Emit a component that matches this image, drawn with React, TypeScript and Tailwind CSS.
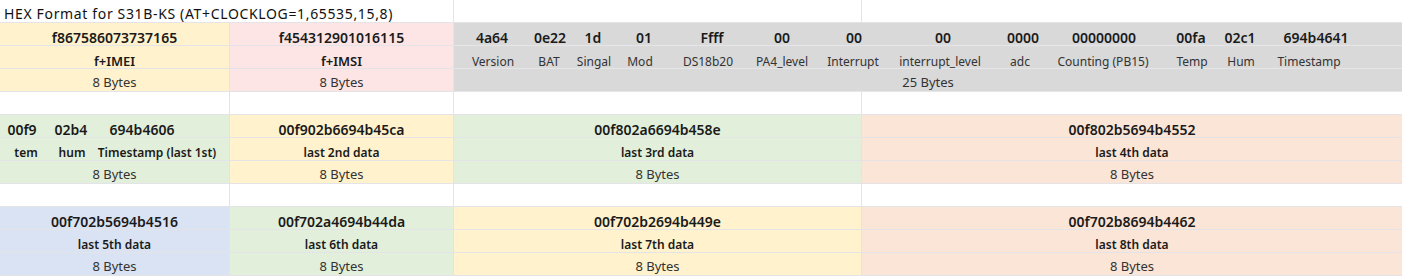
import React from "react";

const VAL = "text-[14px] font-semibold leading-[14px] pt-[8px] text-[#1a1a1a]";
const LABB = "text-[13px] font-semibold leading-[13px] pt-[9px] text-[#1a1a1a]";
const LABD = "text-[12px] font-semibold leading-[12px] pt-[9px] text-[#1a1a1a]";
const LAB = "text-[12px] leading-[12px] pt-[10px] text-[#333]";
const BYT = "text-[13px] leading-[13px] pt-[7px] text-[#333]";

type CellProps = { w: string; bg: string; cls: string; children?: React.ReactNode; last?: boolean };

function Cell({ w, bg, cls, children, last }: CellProps) {
  return (
    <div
      className={`${w} ${bg} ${cls} h-[23px] shrink-0 border-b border-[#e3e3e8] ${last ? "" : "border-r"} whitespace-nowrap text-center`}
    >
      {children}
    </div>
  );
}

type Block = { bg: string; v: string; l: string };

function Band({ cols }: { cols: { w: string; b: Block; last?: boolean }[] }) {
  return (
    <div className="flex">
      {cols.map((c, i) => (
        <div key={i} className={`${c.w} flex flex-col ${c.last ? "flex-1" : "shrink-0"}`}>
          <Cell w="w-full" bg={c.b.bg} cls={VAL} last={c.last}>{c.b.v}</Cell>
          <Cell w="w-full" bg={c.b.bg} cls={LABD} last={c.last}>{c.b.l}</Cell>
          <Cell w="w-full" bg={c.b.bg} cls={BYT} last={c.last}>8 Bytes</Cell>
        </div>
      ))}
    </div>
  );
}

function BlankRow() {
  return (
    <div className="flex">
      <Cell w="w-[230px]" bg="bg-white" cls="" />
      <Cell w="w-[224px]" bg="bg-white" cls="" />
      <Cell w="w-[408px]" bg="bg-white" cls="" />
      <Cell w="flex-1" bg="bg-white" cls="" last />
    </div>
  );
}

const grayVals = [
  { t: "4a64", c: "ml-[18px]" },
  { t: "0e22", c: "ml-[18px]" },
  { t: "1d", c: "ml-[3px]" },
  { t: "01", c: "ml-[11px]" },
  { t: "Ffff", c: "ml-[28px]" },
  { t: "00", c: "ml-[30px]" },
  { t: "00", c: "ml-[32px]" },
  { t: "00", c: "ml-[49px]" },
  { t: "0000", c: "ml-[40px]" },
  { t: "00000000", c: "ml-[41px]" },
  { t: "00fa", c: "ml-[47px]" },
  { t: "02c1", c: "ml-[9px]" },
  { t: "694b4641", c: "ml-[36px]" },
];

const grayLabs = [
  { t: "Version", c: "ml-[19px]" },
  { t: "BAT", c: "ml-[16px]" },
  { t: "Singal", c: "ml-[5px]" },
  { t: "Mod", c: "ml-[6px]" },
  { t: "DS18b20", c: "ml-[28px]" },
  { t: "PA4_level", c: "ml-[34px]" },
  { t: "Interrupt", c: "ml-[31px]" },
  { t: "interrupt_level", c: "ml-[47px]" },
  { t: "adc", c: "ml-[40px]" },
  { t: "Counting (PB15)", c: "ml-[43px]" },
  { t: "Temp", c: "ml-[49px]" },
  { t: "Hum", c: "ml-[9px]" },
  { t: "Timestamp", c: "ml-[28px]" },
];

export default function App() {
  return (
    <div className="w-[1402px] h-[276px] overflow-hidden bg-white font-['Noto_Sans','Liberation_Sans',sans-serif]">
      {/* title row */}
      <div className="flex">
        <div className="w-[454px] h-[23px] shrink-0 border-b border-r border-[#e3e3e8] pl-[4px] pt-[7px] text-[14px] leading-[14px] tracking-[0.65px] text-[#111] whitespace-nowrap">
          HEX Format for S31B-KS (AT+CLOCKLOG=1,65535,15,8)
        </div>
        <Cell w="w-[408px]" bg="bg-white" cls="" />
        <Cell w="flex-1" bg="bg-white" cls="" last />
      </div>

      {/* band 1 */}
      <div className="flex">
        <div className="w-[230px] shrink-0 flex flex-col">
          <Cell w="w-full" bg="bg-[#fff2cc]" cls={VAL}>f867586073737165</Cell>
          <Cell w="w-full" bg="bg-[#fff2cc]" cls={LABB}>f+IMEI</Cell>
          <Cell w="w-full" bg="bg-[#fff2cc]" cls={BYT}>8 Bytes</Cell>
        </div>
        <div className="w-[224px] shrink-0 flex flex-col">
          <Cell w="w-full" bg="bg-[#fde5e5]" cls={VAL}>f454312901016115</Cell>
          <Cell w="w-full" bg="bg-[#fde5e5]" cls={LABB}>f+IMSI</Cell>
          <Cell w="w-full" bg="bg-[#fde5e5]" cls={BYT}>8 Bytes</Cell>
        </div>
        <div className="flex-1 flex flex-col bg-[#d9d9d9]">
          <div className={`flex h-[23px] border-b border-[#e6e6e9] ${VAL}`}>
            {grayVals.map((g, i) => (
              <div key={i} className={`w-[40px] shrink-0 flex justify-center whitespace-nowrap ${g.c}`}>
                {g.t}
              </div>
            ))}
          </div>
          <div className={`flex h-[23px] border-b border-[#e6e6e9] ${LAB}`}>
            {grayLabs.map((g, i) => (
              <div key={i} className={`w-[40px] shrink-0 flex justify-center whitespace-nowrap ${g.c}`}>
                {g.t}
              </div>
            ))}
          </div>
          <div className={`h-[23px] border-b border-[#e6e6e9] text-center ${BYT}`}>25 Bytes</div>
        </div>
      </div>

      <BlankRow />

      {/* band 2 */}
      <div className="flex">
        <div className="w-[230px] shrink-0 flex flex-col">
          <Cell w="w-full" bg="bg-[#e2efda]" cls={VAL}>
            <div className="flex">
              <span className="w-[40px] ml-[2px] flex justify-center">00f9</span>
              <span className="w-[40px] ml-[9px] flex justify-center">02b4</span>
              <span className="w-[40px] ml-[31px] flex justify-center">694b4606</span>
            </div>
          </Cell>
          <Cell w="w-full" bg="bg-[#e2efda]" cls={LABD}>
            <div className="flex">
              <span className="w-[40px] ml-[6px] flex justify-center">tem</span>
              <span className="w-[40px] ml-[6px] flex justify-center">hum</span>
              <span className="w-[40px] ml-[45px] flex justify-center whitespace-nowrap">Timestamp (last 1st)</span>
            </div>
          </Cell>
          <Cell w="w-full" bg="bg-[#e2efda]" cls={BYT}>8 Bytes</Cell>
        </div>
        <Band
          cols={[
            { w: "w-[224px]", b: { bg: "bg-[#fff2cc]", v: "00f902b6694b45ca", l: "last 2nd data" } },
            { w: "w-[408px]", b: { bg: "bg-[#e2efda]", v: "00f802a6694b458e", l: "last 3rd data" } },
            { w: "w-[540px]", b: { bg: "bg-[#fbe5d6]", v: "00f802b5694b4552", l: "last 4th data" }, last: true },
          ]}
        />
      </div>

      <BlankRow />

      {/* band 3 */}
      <Band
        cols={[
          { w: "w-[230px]", b: { bg: "bg-[#dae3f3]", v: "00f702b5694b4516", l: "last 5th data" } },
          { w: "w-[224px]", b: { bg: "bg-[#e2efda]", v: "00f702a4694b44da", l: "last 6th data" } },
          { w: "w-[408px]", b: { bg: "bg-[#fff2cc]", v: "00f702b2694b449e", l: "last 7th data" } },
          { w: "w-[540px]", b: { bg: "bg-[#fbe5d6]", v: "00f702b8694b4462", l: "last 8th data" }, last: true },
        ]}
      />
    </div>
  );
}
